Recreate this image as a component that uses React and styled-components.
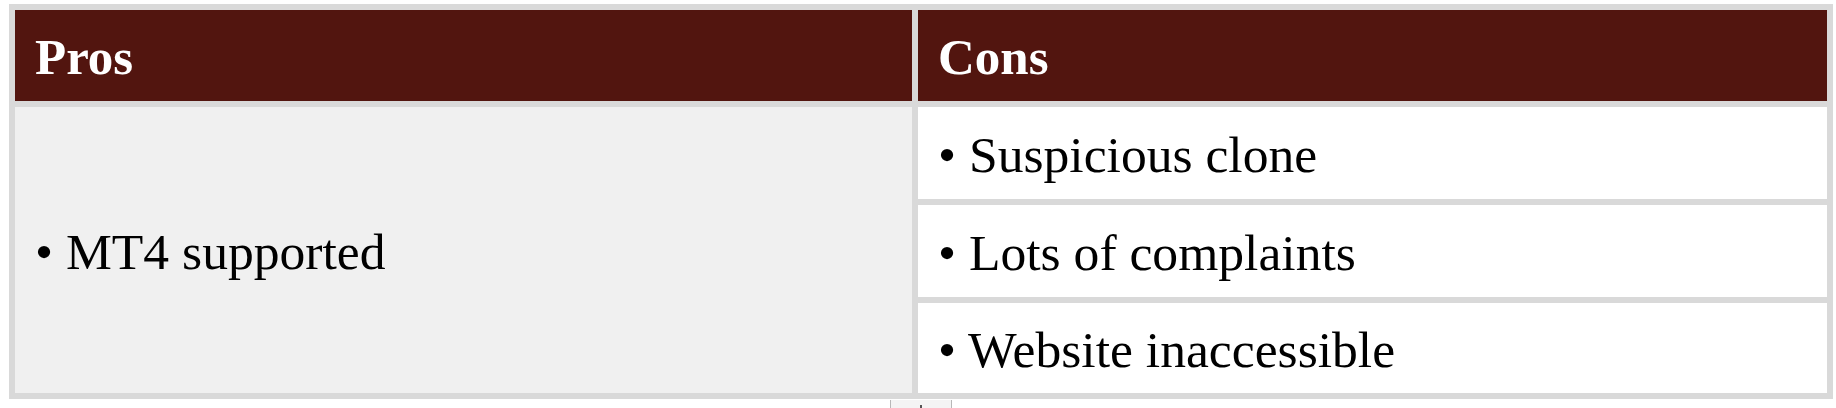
import React from 'react';
import styled, { createGlobalStyle } from 'styled-components';

const GlobalStyle = createGlobalStyle`
	body {
		margin: 0;
		background: #ffffff;
		font-family: "Liberation Serif", "Times New Roman", serif;
	}
`;

const pros = ['MT4 supported'];
const cons = ['Suspicious clone', 'Lots of complaints', 'Website inaccessible'];

function App() {
	return (
		<Page>
			<GlobalStyle />
			<Table>
				<HeadCell>Pros</HeadCell>
				<HeadCell>Cons</HeadCell>
				<Cell $tone="grey" $span={cons.length}>
					{pros.map(p => (
						<Item key={p}>{p}</Item>
					))}
				</Cell>
				{cons.map(c => (
					<Cell key={c}>
						<Item>{c}</Item>
					</Cell>
				))}
			</Table>
			<Handle>
				<Dot />
			</Handle>
		</Page>
	);
}

const Page = styled.div`
	padding: 4px 3px 0 9px;
	height: 404px;
	overflow: hidden;
`;

const Table = styled.div`
	display: grid;
	grid-template-columns: 897fr 909fr;
	grid-template-rows: 91px 92px 92px 90px;
	gap: 6px;
	padding: 6px;
	background: #d9d9d9;
	width: 1824px;
	box-sizing: border-box;
`;

const HeadCell = styled.div`
	background: #52150f;
	color: #ffffff;
	font-weight: 700;
	font-size: 51px;
	display: flex;
	align-items: center;
	padding: 2px 20px 0;
`;

const Cell = styled.div`
	background: ${p => (p.$tone === 'grey' ? '#f0f0f0' : '#ffffff')};
	grid-row: ${p => (p.$span ? `span ${p.$span}` : 'auto')};
	display: flex;
	flex-direction: column;
	justify-content: center;
	padding: 2px 20px 0;
	font-size: 51.6px;
	color: #000000;
`;

const Item = styled.div`
	&::before {
		content: '• ';
	}
`;

const Handle = styled.div`
	margin: 1px 0 0 881px;
	width: 60px;
	height: 10px;
	border-left: 1px solid #b8b8b8;
	border-right: 1px solid #b8b8b8;
	background: #f4f4f4;
	position: relative;
`;

const Dot = styled.span`
	position: absolute;
	left: 29px;
	top: 5px;
	width: 2px;
	height: 3px;
	background: #555555;
`;

export default App;
